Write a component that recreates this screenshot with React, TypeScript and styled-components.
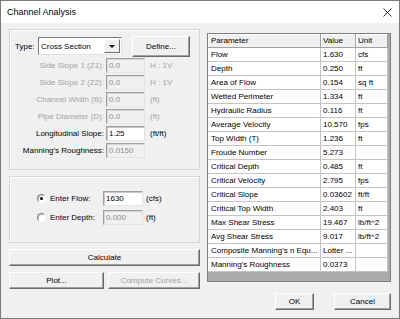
import React from "react"
import styled, { createGlobalStyle, css } from "styled-components"

const GlobalStyle = createGlobalStyle`
  html, body {
    margin: 0;
    padding: 0;
    background: #f0f0f0;
  }
  body {
    font-family: "Liberation Sans", Arial, sans-serif;
    font-size: 8px;
    color: #000;
  }
`

const Window = styled.div`
  box-sizing: border-box;
  width: 400px;
  height: 319px;
  display: flex;
  flex-direction: column;
  border: 1px solid #7a7a7a;
  background: #f0f0f0;
`

const TitleBar = styled.div`
  height: 22px;
  flex: none;
  display: flex;
  align-items: center;
  justify-content: space-between;
  background: #fff;
  padding: 0 7px 0 6px;
`

const Title = styled.span`
  font-size: 9px;
  color: #000;
`

const Body = styled.div`
  flex: 1;
  display: flex;
  gap: 7px;
  padding: 6px 8px 0 8px;
`

const LeftColumn = styled.div`
  width: 191px;
  display: flex;
  flex-direction: column;
  gap: 6px;
`

const GroupBox = styled.div<{ $height: number }>`
  box-sizing: border-box;
  height: ${p => p.$height}px;
  border: 1px solid #d5d5d5;
  box-shadow: inset 1px 1px 0 #fff;
`

const TypeRow = styled.div`
  display: flex;
  align-items: center;
  height: 20px;
  margin: 6px 0 0 5px;
`

const TypeLabel = styled.span`
  width: 23px;
`

const Combo = styled.div`
  box-sizing: border-box;
  width: 84px;
  height: 18px;
  display: flex;
  align-items: center;
  background: #fff;
  border: 1px solid;
  border-color: #7a7a7a #e3e3e3 #e3e3e3 #7a7a7a;
  padding-left: 2px;
`

const ComboText = styled.span`
  flex: 1;
`

const ComboButton = styled.div`
  box-sizing: border-box;
  width: 16px;
  height: 14px;
  margin-right: 1px;
  display: flex;
  align-items: center;
  justify-content: center;
  background: #f0f0f0;
  border: 1px solid;
  border-color: #fff #6a6a6a #6a6a6a #fff;
`

const Arrow = styled.span`
  width: 0;
  height: 0;
  border-left: 3px solid transparent;
  border-right: 3px solid transparent;
  border-top: 3px solid #000;
`

const buttonLook = css`
  box-sizing: border-box;
  display: flex;
  align-items: center;
  justify-content: center;
  background: #f0f0f0;
  border: 1px solid;
  border-color: #fff #6a6a6a #6a6a6a #fff;
  box-shadow: inset -1px -1px 0 #a0a0a0;
  font-family: inherit;
  font-size: 8px;
  padding: 0;
`

const Button = styled.div<{ $width?: number; $height?: number; $disabled?: boolean }>`
  ${buttonLook};
  width: ${p => (p.$width ? `${p.$width}px` : "auto")};
  height: ${p => p.$height ?? 17}px;
  color: ${p => (p.$disabled ? "#a0a0a0" : "#000")};
`

const DefineButton = styled(Button)`
  margin-left: 10px;
`

const FieldGrid = styled.div`
  display: grid;
  grid-template-columns: 94px 39px auto;
  grid-auto-rows: 17px;
  column-gap: 2px;
  align-items: center;
  margin-top: 1px;
`

const FieldLabel = styled.span<{ $disabled?: boolean }>`
  text-align: right;
  white-space: nowrap;
  color: ${p => (p.$disabled ? "#a3a3a3" : "#000")};
`

const TextBox = styled.div<{ $disabled?: boolean; $width?: number }>`
  box-sizing: border-box;
  width: ${p => p.$width ?? 39}px;
  height: 15px;
  display: flex;
  align-items: center;
  padding-left: 2px;
  background: ${p => (p.$disabled ? "#f0f0f0" : "#fff")};
  color: ${p => (p.$disabled ? "#8d8d8d" : "#000")};
  border: 1px solid;
  border-color: #a0a0a0 #e3e3e3 #e3e3e3 #a0a0a0;
  box-shadow: inset 1px 1px 0 ${p => (p.$disabled ? "#d6d6d6" : "#c8c8c8")};
`

const Unit = styled.span<{ $disabled?: boolean }>`
  margin-left: 3px;
  white-space: nowrap;
  color: ${p => (p.$disabled ? "#a3a3a3" : "#000")};
`

const RadioList = styled.div`
  display: flex;
  flex-direction: column;
  gap: 4px;
  padding: 14px 0 0 27px;
`

const RadioRow = styled.div`
  display: flex;
  align-items: center;
  height: 15px;
`

const Radio = styled.span<{ $checked?: boolean }>`
  box-sizing: border-box;
  width: 9px;
  height: 9px;
  border-radius: 50%;
  border: 1px solid;
  border-color: #808080 #fff #fff #808080;
  background: #fff;
  box-shadow: inset 1px 1px 0 #c0c0c0;
  display: flex;
  align-items: center;
  justify-content: center;
  &::after {
    content: "";
    width: 3px;
    height: 3px;
    border-radius: 50%;
    background: ${p => (p.$checked ? "#000" : "transparent")};
  }
`

const RadioLabel = styled.span`
  width: 53px;
  margin-left: 4px;
`

const ButtonRow = styled.div`
  display: flex;
  gap: 4px;
`

const RightColumn = styled.div`
  width: 184px;
  display: flex;
  flex-direction: column;
  padding-top: 4px;
`

const Grid = styled.div`
  box-sizing: border-box;
  height: 249px;
  display: flex;
  flex-direction: column;
  background: #ababab;
  border: 1px solid #7f7f7f;
`

const GridRow = styled.div`
  display: flex;
  height: 14px;
  flex: none;
`

const Cell = styled.div<{ $width: number; $header?: boolean }>`
  box-sizing: border-box;
  width: ${p => p.$width}px;
  height: 14px;
  padding-left: ${p => (p.$width > 100 ? 3 : 2)}px;
  display: flex;
  align-items: center;
  white-space: nowrap;
  overflow: hidden;
  background: ${p => (p.$header ? "#f0f0f0" : "#fff")};
  border-right: 1px solid ${p => (p.$header ? "#a0a0a0" : "#c4c4c4")};
  border-bottom: 1px solid ${p => (p.$header ? "#a0a0a0" : "#c4c4c4")};
  ${p => p.$header && "box-shadow: inset 1px 1px 0 #fff;"}
`

const DialogButtons = styled.div`
  display: flex;
  justify-content: flex-end;
  gap: 20px;
  margin-top: 11px;
`

const widths = [113, 35, 32]

const results: [string, string, string][] = [
  ["Flow", "1.630", "cfs"],
  ["Depth", "0.250", "ft"],
  ["Area of Flow", "0.154", "sq ft"],
  ["Wetted Perimeter", "1.334", "ft"],
  ["Hydraulic Radius", "0.116", "ft"],
  ["Average Velocity", "10.570", "fps"],
  ["Top Width (T)", "1.236", "ft"],
  ["Froude Number", "5.273", ""],
  ["Critical Depth", "0.485", "ft"],
  ["Critical Velocity", "2.795", "fps"],
  ["Critical Slope", "0.03602", "ft/ft"],
  ["Critical Top Width", "2.403", "ft"],
  ["Max Shear Stress", "19.467", "lb/ft^2"],
  ["Avg Shear Stress", "9.017", "lb/ft^2"],
  ["Composite Manning's n Equ...", "Lotter ...", ""],
  ["Manning's Roughness", "0.0373", ""],
]

const fields = [
  { label: "Side Slope 1 (Z1):", value: "0.0", unit: "H : 1V", labelOff: true, boxOff: true },
  { label: "Side Slope 2 (Z2):", value: "0.0", unit: "H : 1V", labelOff: true, boxOff: true },
  { label: "Channel Width (B):", value: "0.0", unit: "(ft)", labelOff: true, boxOff: true },
  { label: "Pipe Diameter (D):", value: "0.0", unit: "(ft)", labelOff: true, boxOff: true },
  { label: "Longitudinal Slope:", value: "1.25", unit: "(ft/ft)", labelOff: false, boxOff: false },
  { label: "Manning's Roughness:", value: "0.0150", unit: "", labelOff: false, boxOff: true },
]

const CloseIcon = () => (
  <svg width="9" height="9" viewBox="0 0 9 9">
    <path d="M0.5 0.5 L8.5 8.5 M8.5 0.5 L0.5 8.5" stroke="#333" strokeWidth="1" fill="none" />
  </svg>
)

export default function App() {
  return (
    <>
      <GlobalStyle />
      <Window>
        <TitleBar>
          <Title>Channel Analysis</Title>
          <CloseIcon />
        </TitleBar>
        <Body>
          <LeftColumn>
            <GroupBox $height={141}>
              <TypeRow>
                <TypeLabel>Type:</TypeLabel>
                <Combo>
                  <ComboText>Cross Section</ComboText>
                  <ComboButton>
                    <Arrow />
                  </ComboButton>
                </Combo>
                <DefineButton $width={58} $height={21}>
                  Define...
                </DefineButton>
              </TypeRow>
              <FieldGrid>
                {fields.map(f => (
                  <React.Fragment key={f.label}>
                    <FieldLabel $disabled={f.labelOff}>{f.label}</FieldLabel>
                    <TextBox $disabled={f.boxOff}>{f.value}</TextBox>
                    <Unit $disabled={f.labelOff}>{f.unit}</Unit>
                  </React.Fragment>
                ))}
              </FieldGrid>
            </GroupBox>
            <GroupBox $height={67}>
              <RadioList>
                <RadioRow>
                  <Radio $checked />
                  <RadioLabel>Enter Flow:</RadioLabel>
                  <TextBox $width={40}>1630</TextBox>
                  <Unit>(cfs)</Unit>
                </RadioRow>
                <RadioRow>
                  <Radio />
                  <RadioLabel>Enter Depth:</RadioLabel>
                  <TextBox $width={40} $disabled>
                    0.000
                  </TextBox>
                  <Unit>(ft)</Unit>
                </RadioRow>
              </RadioList>
            </GroupBox>
            <Button>Calculate</Button>
            <ButtonRow>
              <Button $width={95}>Plot...</Button>
              <Button $width={92} $disabled>
                Compute Curves...
              </Button>
            </ButtonRow>
          </LeftColumn>
          <RightColumn>
            <Grid>
              <GridRow>
                {["Parameter", "Value", "Unit"].map((h, i) => (
                  <Cell key={h} $width={widths[i]} $header>
                    {h}
                  </Cell>
                ))}
              </GridRow>
              {results.map(r => (
                <GridRow key={r[0]}>
                  {r.map((v, i) => (
                    <Cell key={i} $width={widths[i]}>
                      {v}
                    </Cell>
                  ))}
                </GridRow>
              ))}
            </Grid>
            <DialogButtons>
              <Button $width={39}>OK</Button>
              <Button $width={57}>Cancel</Button>
            </DialogButtons>
          </RightColumn>
        </Body>
      </Window>
    </>
  )
}
